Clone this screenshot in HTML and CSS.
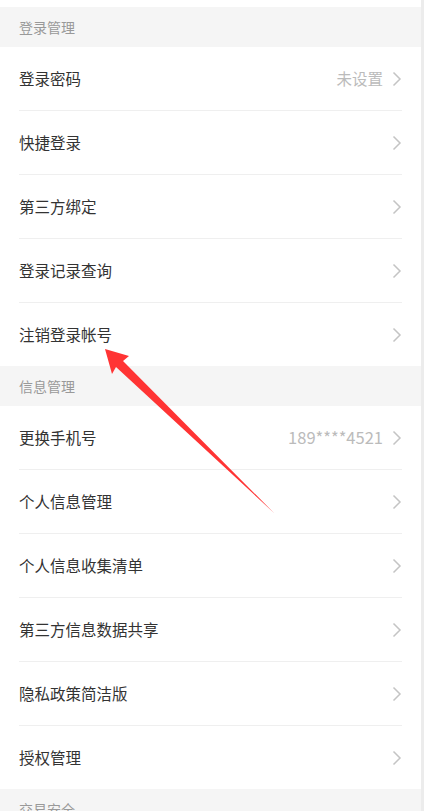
FILE: index.html
```html
<!DOCTYPE html>
<html lang="zh">
<head>
<meta charset="utf-8">
<link rel="stylesheet" href="styles.css">
</head>
<body>
<div class="page">
  <div class="top"></div>
  <div class="section-title">登录管理</div>
  <div class="group">
    <div class="row"><span class="label">登录密码</span><span class="value">未设置</span><svg class="chev" viewBox="0 0 10 16"><polyline points="1.5,1.5 8,8 1.5,14.5"/></svg></div>
    <div class="row"><span class="label">快捷登录</span><svg class="chev" viewBox="0 0 10 16"><polyline points="1.5,1.5 8,8 1.5,14.5"/></svg></div>
    <div class="row"><span class="label">第三方绑定</span><svg class="chev" viewBox="0 0 10 16"><polyline points="1.5,1.5 8,8 1.5,14.5"/></svg></div>
    <div class="row"><span class="label">登录记录查询</span><svg class="chev" viewBox="0 0 10 16"><polyline points="1.5,1.5 8,8 1.5,14.5"/></svg></div>
    <div class="row"><span class="label">注销登录帐号</span><svg class="chev" viewBox="0 0 10 16"><polyline points="1.5,1.5 8,8 1.5,14.5"/></svg></div>
  </div>
  <div class="section-title">信息管理</div>
  <div class="group">
    <div class="row"><span class="label">更换手机号</span><span class="value num">189****4521</span><svg class="chev" viewBox="0 0 10 16"><polyline points="1.5,1.5 8,8 1.5,14.5"/></svg></div>
    <div class="row"><span class="label">个人信息管理</span><svg class="chev" viewBox="0 0 10 16"><polyline points="1.5,1.5 8,8 1.5,14.5"/></svg></div>
    <div class="row"><span class="label">个人信息收集清单</span><svg class="chev" viewBox="0 0 10 16"><polyline points="1.5,1.5 8,8 1.5,14.5"/></svg></div>
    <div class="row"><span class="label">第三方信息数据共享</span><svg class="chev" viewBox="0 0 10 16"><polyline points="1.5,1.5 8,8 1.5,14.5"/></svg></div>
    <div class="row"><span class="label">隐私政策简洁版</span><svg class="chev" viewBox="0 0 10 16"><polyline points="1.5,1.5 8,8 1.5,14.5"/></svg></div>
    <div class="row"><span class="label">授权管理</span><svg class="chev" viewBox="0 0 10 16"><polyline points="1.5,1.5 8,8 1.5,14.5"/></svg></div>
  </div>
  <div class="section-title">交易安全</div>
</div>
<svg class="arrow" width="424" height="811" viewBox="0 0 424 811">
  <polygon points="105,349 129,356 123,361 274,513 116,367 112,374" fill="#ff3434"/>
</svg>
</body>
</html>
```
FILE: styles.css
```css
html, body {
  margin: 0;
  padding: 0;
}
body {
  background: #ececec;
  width: 424px;
  height: 811px;
  overflow: hidden;
  position: relative;
  font-family: "Noto Sans CJK SC", "Noto Sans", sans-serif;
}
.page {
  width: 421px;
  background: #ffffff;
}
.top {
  height: 7px;
  background: #ffffff;
}
.section-title {
  height: 40px;
  background: #f5f5f5;
  padding-left: 19px;
  display: flex;
  align-items: center;
  font-size: 14px;
  line-height: 1;
  color: #999999;
}
.group {
  background: #ffffff;
  padding: 0 19px 0 19px;
}
.row {
  height: 63px;
  display: flex;
  align-items: center;
  border-bottom: 1px solid #efefef;
  line-height: 1;
}
.row:last-child {
  border-bottom: none;
}
.label {
  flex: 1;
  font-size: 15.5px;
  color: #333333;
}
.value {
  font-size: 15.5px;
  color: #bbbbbb;
  margin-right: 9px;
}
.value.num {
  font-size: 16.5px;
}
.chev {
  width: 10px;
  height: 16px;
  display: block;
}
.chev polyline {
  fill: none;
  stroke: #c4c4c4;
  stroke-width: 1.5;
}
.arrow {
  position: absolute;
  left: 0;
  top: 0;
  pointer-events: none;
}
```
